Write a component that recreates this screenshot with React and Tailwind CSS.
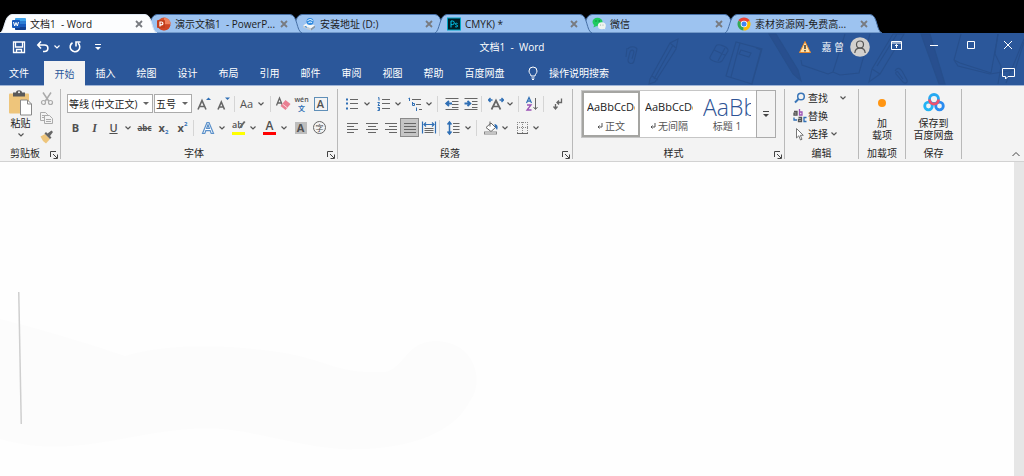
import React, { useState } from 'react';

const windowTabs = [
  { id: 'word', title: '文档1  - Word' },
  { id: 'ppt', title: '演示文稿1  - PowerP...' },
  { id: 'disk', title: '安装地址 (D:)' },
  { id: 'ps', title: 'CMYK) *' },
  { id: 'wechat', title: '微信' },
  { id: 'chrome', title: '素材资源网-免费高...' },
];

const ribbonTabs = ['开始', '插入', '绘图', '设计', '布局', '引用', '邮件', '审阅', '视图', '帮助'];

const TabIcon = ({ id }) => {
  switch (id) {
    case 'word':
      return (
        <svg viewBox="0 0 14 14" className="h-3.5 w-3.5 shrink-0">
          <rect x="3" y="1" width="11" height="12" rx="1" fill="#41a5ee" />
          <rect x="3" y="4" width="11" height="3" fill="#2b7cd3" />
          <rect x="3" y="7" width="11" height="3" fill="#185abd" />
          <path d="M3 10h11v2a1 1 0 0 1-1 1H4a1 1 0 0 1-1-1z" fill="#103f91" />
          <rect x="0" y="3" width="8" height="8" rx="1" fill="#185abd" />
          <path d="M1.5 5l1.2 4L4 5.500 5.300 9l1.200-4" fill="none" stroke="#fff" strokeWidth="1" />
        </svg>
      );
    case 'ppt':
      return (
        <svg viewBox="0 0 14 14" className="h-3.5 w-3.5 shrink-0">
          <circle cx="7" cy="7" r="6.500" fill="#d35230" />
          <path d="M7 .5A6.500 6.500 0 0 1 13.500 7H7z" fill="#f0805c" />
          <path d="M.6 8h12.800a6.500 6.500 0 0 1-12.800 0z" fill="#cf4526" />
          <rect x="0" y="3" width="8" height="8" rx="1" fill="#c43e1c" />
          <path d="M3 9.500V5h1.500a1.400 1.400 0 0 1 0 2.800H3" fill="none" stroke="#fff" strokeWidth="1.200" />
        </svg>
      );
    case 'disk':
      return (
        <svg viewBox="0 0 14 14" className="h-3.5 w-3.5 shrink-0">
          <path d="M1 8.500l5-3 7 3-4 3z" fill="#f2f5f7" />
          <path d="M1 8.500l8 3v2l-8-3z" fill="#c3ccd4" />
          <path d="M9 11.500l4-3v2l-4 3z" fill="#8a96a0" />
          <circle cx="8" cy="4.500" r="3.500" fill="#2f8ae0" />
          <path d="M5.500 4c1.500-2 4-2 5 0M6.500 6c1-1.200 2.500-1 3.500-.4" fill="none" stroke="#e5f3ff" strokeWidth="1.100" />
          <path d="M3 9.500l2 .8" stroke="#2f8ae0" />
        </svg>
      );
    case 'ps':
      return (
        <svg viewBox="0 0 14 14" className="h-3.5 w-3.5 shrink-0">
          <rect x=".5" y="1" width="13" height="12" fill="#001e26" stroke="#00a8c8" />
          <path d="M4 10.500V4h1.500a1.800 1.800 0 0 1 0 3.600H4M10.500 6.500c-1-.6-2.500-.3-2.300.6.2 1 2.400.6 2.400 1.900 0 1-1.600 1.200-2.500.6" fill="none" stroke="#00c8f0" />
        </svg>
      );
    case 'wechat':
      return (
        <svg viewBox="0 0 14 14" className="h-3.5 w-3.5 shrink-0">
          <ellipse cx="5.500" cy="5" rx="5" ry="4.200" fill="#1fcb60" />
          <path d="M2 8l-.5 2.500L4.500 9z" fill="#1fcb60" />
          <ellipse cx="9.800" cy="8.800" rx="4" ry="3.500" fill="#eef4f0" />
          <path d="M11.500 11.500l1.800 1-.5-2z" fill="#eef4f0" />
          <circle cx="4" cy="4" r=".7" fill="#0a7a35" />
          <circle cx="7.200" cy="4" r=".7" fill="#0a7a35" />
          <circle cx="8.600" cy="8" r=".5" fill="#8a9a90" />
          <circle cx="11" cy="8" r=".5" fill="#8a9a90" />
        </svg>
      );
    default:
      return (
        <svg viewBox="0 0 14 14" className="h-3.5 w-3.5 shrink-0">
          <path d="M7 7L1.400 3.700A6.500 6.500 0 0 1 12.600 3.700z" fill="#ea4335" />
          <path d="M7 7L1.400 3.700A6.500 6.500 0 0 0 6.500 13.500z" fill="#34a853" />
          <path d="M7 7l5.600-3.300A6.500 6.500 0 0 1 6.500 13.500z" fill="#fbbc05" />
          <circle cx="7" cy="7" r="3.300" fill="#fff" />
          <circle cx="7" cy="7" r="2.500" fill="#4285f4" />
        </svg>
      );
  }
};

const WindowTab = ({ tab, active, raised, onSelect }) => (
  <div className={`relative h-[19px] w-[145px] shrink-0 ${active ? 'z-20' : raised ? 'z-10' : ''}`}>
    <svg viewBox="0 0 157 19" className="absolute top-0 left-0 h-[19px] w-[157px]">
      <path
        d="M0 19C5 17 4 1 12 .5H145C153 1 151 17 157 19z"
        fill={active ? '#fcfdfe' : '#9dc3f0'}
        stroke={active ? '#dfe8f3' : '#466fa5'}
        strokeWidth="1"
      />
    </svg>
    <div className="relative flex h-full items-center pl-3">
      <button onClick={onSelect} className="flex w-[122px] items-center gap-1 whitespace-pre text-[#1c1c1c]">
        <TabIcon id={tab.id} />
        {tab.title}
      </button>
      <button aria-label="关闭标签" className="flex h-3 w-3 shrink-0 items-center justify-center">
        <svg viewBox="0 0 8 8" className="h-2 w-2">
          <path d="M1 1l6 6M7 1L1 7" stroke="#787b80" strokeWidth="1.800" />
        </svg>
      </button>
    </div>
  </div>
);

// School supplies doodle behind the title bar
const HeaderArt = () => (
  <svg
    viewBox="0 0 404 52"
    className="pointer-events-none absolute top-0 right-0 h-[52px] w-[404px]"
    fill="none"
    stroke="#274f8c"
    strokeWidth="1.100"
  >
    <path d="M8 16c1-3 8-3 9 0l-3 12c-1 4-6 3-6-1l2-8c1-3 4-2 4 0l-2 7M7 15l-1 9" />
    <path d="M58 6L50 10 30 46 29 51 35 49 56 16zM50 10l6 5M32 43l6 4M53 12L34 46" />
    <path d="M90 24l6-11c2-3 13 1 12 5l-6 10c-3 3-14-1-12-4zM94 17l11 5M98 28l7-13" />
    <path d="M106 43L116 9l26 7-10 35zM120 10l-9 34M106 43l26 8M121 17l10 3-2 4-10-3zM136 15l5 2-9 33" />
    <path d="M149 1h7l22 36 3 11-8-7z" fill="#284f8f" />
    <path d="M181 27l1 5 26 9 5-2 7 3 19-2 11-39M213 39l12-38" />
    <path d="M249 49l3-13 21-35h11l-24 40zM252 36l8 5M257 33l20-32" />
    <path d="M275 38c2-4 5-3 7 0l5 9c1 3-2 4-4 2l-7-8c-1-2 1-3 2-2l5 7" />
    <path d="M301 1h9l15 50h-6z" fill="#284f8f" />
    <path d="M341 1l-7 26 4 6 32 8 25-4 9-28M371 40l7-39M334 27l6 3 31 10" />
    <path d="M378 1l-3 20 6 12-3 18M404 6l-18 44" />
  </svg>
);

const Chevron = ({ color = '#555' }) => (
  <svg viewBox="0 0 6 4" className="h-1 w-1.5" aria-hidden="true">
    <path d="M.5.5L3 3 5.500.5" fill="none" stroke={color} strokeWidth="1.200" />
  </svg>
);

const Tool = ({ label, on, children }) => (
  <button
    aria-label={label}
    title={label}
    className={`flex h-[19px] w-[19px] shrink-0 items-center justify-center leading-none text-[#505050] ${on ? 'border border-[#8a8a8a] bg-[#c5c5c5]' : ''}`}
  >
    {children}
  </button>
);

const Drop = ({ label }) => (
  <button aria-label={label} className="flex h-[19px] w-3 shrink-0 items-center justify-center pr-0.5">
    <Chevron />
  </button>
);

const Sep = () => <span className="mx-0.5 h-4 w-px shrink-0 bg-[#d5d5d5]" />;

const WideSep = () => <span className="mr-1 ml-px h-4 w-px shrink-0 bg-[#d5d5d5]" />;

const Svg = ({ children }) => (
  <svg viewBox="0 0 16 16" className="h-4 w-4 shrink-0" fill="none" stroke="#666" strokeWidth="1">
    {children}
  </svg>
);

const Group = ({ label, launcher, className, children }) => (
  <section className={`flex shrink-0 flex-col border-r border-[#b9b9b9] ${className}`}>
    <div className="flex-1">{children}</div>
    <div className="flex h-3 items-center">
      <span className="flex-1 text-center leading-3">{label}</span>
      {launcher && (
        <button aria-label={`${label}设置`} className="mt-1 mr-0.5 h-2 w-2">
          <svg viewBox="0 0 8 8" className="h-2 w-2" fill="none" stroke="#444">
            <path d="M.5 6V.5H6M3 3l4 4M7.500 3.500v4h-4" />
          </svg>
        </button>
      )}
    </div>
  </section>
);

const ClipboardGroup = () => (
  <Group label="剪贴板" launcher className="w-[61px]">
    <div className="flex gap-1 pl-2">
      <button className="flex w-[25px] flex-col items-center">
        <svg viewBox="0 0 25 27" className="h-7 w-[25px]">
          <rect x="1" y="4" width="20" height="20" rx="1" fill="#eec57b" />
          <path d="M5 3h3c0-3 6-3 6 0h3v4H5z" fill="#595959" />
          <circle cx="11" cy="2.800" r="1" fill="#f3f3f3" />
          <path d="M12.500 10.500h7l4 4v11h-11z" fill="#fff" stroke="#888" />
          <path d="M19.500 10.500v4h4" fill="none" stroke="#888" />
        </svg>
        <span className="leading-3">粘贴</span>
        <span className="flex h-3 items-center"><Chevron /></span>
      </button>
      <div className="flex flex-col">
        <Tool label="剪切">
          <Svg>
            <path d="M4 1.500l6 9M12 1.500l-6 9" stroke="#aaa" strokeWidth="1.500" />
            <circle cx="4.500" cy="11.500" r="2" stroke="#aaa" strokeWidth="1.200" />
            <circle cx="11.500" cy="11.500" r="2" stroke="#aaa" strokeWidth="1.200" />
          </Svg>
        </Tool>
        <Tool label="复制">
          <Svg>
            <path d="M1.500 2.500h5l2 2v6h-7zM3 5.500h3M3 7.500h3" stroke="#aaa" />
            <path d="M5.500 5.500h5l3 3v5h-8z" fill="#f3f3f3" stroke="#aaa" />
            <path d="M7 9.500h5M7 11.500h5" stroke="#aaa" />
          </Svg>
        </Tool>
        <Tool label="格式刷">
          <Svg>
            <path d="M1.500 7.500l4.500-2.500 5 5-4 4.500-3-2.500z" fill="#eec57b" stroke="none" />
            <path d="M5.500 4.500l5.500 5.500 1.500-1.500-1.500-1.500 3-4-1.500-1.500-4 3-1.500-1.500z" fill="#666" stroke="none" />
          </Svg>
        </Tool>
      </div>
    </div>
  </Group>
);

const FontGroup = () => (
  <Group label="字体" launcher className="w-[277px]">
    <div className="mt-[5px] flex flex-col gap-[5px]">
      <div className="flex items-center pl-1.5">
        <div className="relative">
          <select aria-label="字体名称" className="h-[19px] w-[86px] appearance-none border border-[#ababab] bg-white pl-px text-[#222]">
            <option>等线 (中文正文)</option>
          </select>
          <span className="pointer-events-none absolute top-2 right-1 border-x-3 border-t-3 border-x-transparent border-t-[#666]" />
        </div>
        <div className="relative mr-0.5 ml-px">
          <select aria-label="字号" className="h-[19px] w-[38px] appearance-none border border-[#ababab] bg-white pl-px text-[#222]">
            <option>五号</option>
          </select>
          <span className="pointer-events-none absolute top-2 right-1 border-x-3 border-t-3 border-x-transparent border-t-[#666]" />
        </div>
        <Tool label="增大字号">
          <Svg>
            <path d="M2 13.500L6 4.500l4 9M3.500 10.500h5" strokeWidth="1.600" />
            <path d="M10 4L12.500 1.500 15 4z" fill="#2f6fb5" stroke="none" />
          </Svg>
        </Tool>
        <Tool label="减小字号">
          <Svg>
            <path d="M3 13.500l3.300-7.500 3.200 7.500M4.500 11h4" strokeWidth="1.600" />
            <path d="M10 1.500L12.500 4 15 1.500z" fill="#2f6fb5" stroke="none" />
          </Svg>
        </Tool>
        <Sep />
        <Tool label="更改大小写"><span className="text-[11px]">Aa</span></Tool>
        <Drop label="大小写选项" />
        <Sep />
        <Tool label="清除格式">
          <Svg>
            <path d="M1.500 9.500l3-7.500 3 7.500M3 7h3" strokeWidth="1.300" />
            <path d="M10.500 4l5 4-5 6-5-4z" fill="#ea7f92" stroke="none" />
            <path d="M7.500 8l5 4" stroke="#fbd5db" />
          </Svg>
        </Tool>
        <Tool label="拼音指南">
          <span className="flex flex-col items-center text-[7px] leading-[9px]">
            <span className="font-semibold">wén</span>
            <span className="font-bold text-[#2f6fb5]">文</span>
          </span>
        </Tool>
        <Tool label="字符边框">
          <span className="flex h-[14px] w-[14px] items-center justify-center border border-[#5f8fb8] text-[11px] font-semibold">A</span>
        </Tool>
      </div>
      <div className="flex items-center pl-[5px]">
        <Tool label="加粗"><b className="text-[11px]">B</b></Tool>
        <Tool label="倾斜"><i className="font-['Liberation_Serif'] text-[12px] font-bold">I</i></Tool>
        <Tool label="下划线"><u className="text-[11px] font-semibold">U</u></Tool>
        <Drop label="下划线选项" />
        <Tool label="删除线"><s className="text-[8px] font-bold">abc</s></Tool>
        <Tool label="下标"><b className="text-[11px]">x</b><b className="mt-2 text-[6px] text-[#2f6fb5]">2</b></Tool>
        <Tool label="上标"><b className="text-[11px]">x</b><b className="mb-2 text-[6px] text-[#2f6fb5]">2</b></Tool>
        <WideSep />
        <Tool label="文本效果">
          <Svg>
            <path d="M2.500 13.500L7 2.500h2l4.500 11h-2.300l-1-2.800H5.800l-1 2.800zM6.600 8.500h2.800L8 4.800z" stroke="#5b90c9" strokeWidth="1.200" fill="#fff" />
          </Svg>
        </Tool>
        <Drop label="文本效果选项" />
        <Tool label="突出显示">
          <span className="relative flex h-[15px] w-[13px] border-b-3 border-[#ffff00] text-[9px] font-semibold">
            <span className="leading-[10px]">ab</span>
            <svg viewBox="0 0 8 10" className="absolute top-0 -right-px h-2.5 w-2">
              <path d="M1 9l1-3 4-5 1.500 1-4 5z" fill="#666" />
            </svg>
          </span>
        </Tool>
        <Drop label="突出显示颜色" />
        <Tool label="字体颜色">
          <span className="h-[15px] w-[13px] border-b-3 border-[#ff0000] text-center text-[12px] leading-[12px] font-semibold">A</span>
        </Tool>
        <Drop label="选择字体颜色" />
        <Tool label="字符底纹">
          <span className="flex h-3 w-3 items-center justify-center bg-[#bdbdbd] text-[11px] font-bold">A</span>
        </Tool>
        <Tool label="带圈字符">
          <span className="flex h-[13px] w-[13px] items-center justify-center rounded-full border border-[#666] text-[8px]">字</span>
        </Tool>
      </div>
    </div>
  </Group>
);

const ParagraphGroup = () => (
  <Group label="段落" launcher className="w-[235px]">
    <div className="mt-[5px] flex flex-col gap-[5px] pl-[5px]">
      <div className="flex items-center">
        <Tool label="项目符号">
          <Svg>
            <path d="M5 3.500h8M5 7.500h8M5 12.500h8" />
            <path d="M1 3.500h2M1 7.500h2M1 12.500h2" stroke="#2f6fb5" strokeWidth="2" />
          </Svg>
        </Tool>
        <Drop label="项目符号库" />
        <Tool label="编号">
          <Svg>
            <path d="M6 3.500h8M6 7.500h8M6 12.500h8" />
            <path d="M2 2l1-.5v3M1.500 6.500h2l-1.500 3h2M1.500 11.500h2v3h-2M2 13h1.500" stroke="#2f6fb5" />
          </Svg>
        </Tool>
        <Drop label="编号库" />
        <Tool label="多级列表">
          <Svg>
            <path d="M5 3.500h9M9 8.500h5M12 13.500h3" />
            <path d="M1.500 2.500l1-.5v3M5.500 6v3.500h2V7.500h-2M9.500 11.500v3.500" stroke="#2f6fb5" />
          </Svg>
        </Tool>
        <Drop label="列表库" />
        <WideSep />
        <Tool label="减少缩进量">
          <Svg>
            <path d="M1.500 2.500h13M8 5.500h6.500M8 8.500h6.500M8 11.500h6.500M1.500 13.500h13" />
            <path d="M8 7.500H3M5 5L2.200 7.500 5 10" stroke="#2f6fb5" strokeWidth="1.800" />
          </Svg>
        </Tool>
        <Tool label="增加缩进量">
          <Svg>
            <path d="M1.500 2.500h13M9 5.500h5.500M9 8.500h5.500M9 11.500h5.500M1.500 13.500h13" />
            <path d="M1.500 7.500h5M4.500 5l2.800 2.500L4.500 10" stroke="#2f6fb5" strokeWidth="1.800" />
          </Svg>
        </Tool>
        <WideSep />
        <Tool label="中文版式">
          <Svg>
            <path d="M3.500 13.500L8 4.500l4.500 9M5.500 10.500h5" strokeWidth="1.700" />
            <path d="M.5 4h4M2.500 2l-2 2 2 2M15.500 4h-4M13.500 2l2 2-2 2" stroke="#2f6fb5" strokeWidth="1.400" />
          </Svg>
        </Tool>
        <Drop label="中文版式选项" />
        <WideSep />
        <Tool label="排序">
          <Svg>
            <path d="M1.500 7L4 1.500 6.500 7M2.500 5.200h3" stroke="#2f6fb5" strokeWidth="1.200" />
            <path d="M2 9h4l-4 5h4.500" stroke="#9b51b5" strokeWidth="1.300" />
            <path d="M10.500 2v11M8.500 11l2 2.500 2-2.500" />
          </Svg>
        </Tool>
        <WideSep />
        <Tool label="显示编辑标记">
          <Svg>
            <path d="M11.500 2.500v4H7M9 4.500l-2 2 2 2" strokeWidth="1.300" />
            <path d="M5.500 8v5M3.500 10.500l2 2.500 2-2.500" strokeWidth="1.300" />
          </Svg>
        </Tool>
      </div>
      <div className="flex items-center">
        <Tool label="左对齐"><Svg><path d="M2 3.500h11M2 6.500h7M2 9.500h11M2 12.500h7" /></Svg></Tool>
        <Tool label="居中"><Svg><path d="M2 3.500h12M4 6.500h8M2 9.500h12M4 12.500h8" /></Svg></Tool>
        <Tool label="右对齐"><Svg><path d="M2 3.500h12M6 6.500h8M2 9.500h12M6 12.500h8" /></Svg></Tool>
        <Tool label="两端对齐" on><Svg><path d="M2 3.500h12M2 6.500h12M2 9.500h12M2 12.500h12" /></Svg></Tool>
        <Tool label="分散对齐">
          <Svg>
            <path d="M1.500 1.500v12M14.500 1.500v12M3 4.500h10M5 2.500L3 4.500l2 2M11 2.500l2 2-2 2" stroke="#2f6fb5" strokeWidth="1.200" />
            <path d="M3.500 8.500h9M3.500 10.500h9M3.500 12.500h9" />
          </Svg>
        </Tool>
        <WideSep />
        <Tool label="行和段落间距">
          <Svg>
            <path d="M3.500 2v12M1.500 4.500L3.500 2l2 2.500M1.500 11.500l2 2.500 2-2.500" stroke="#2f6fb5" strokeWidth="1.500" />
            <path d="M7 3.500h6.500M7 6.500h6.500M7 9.500h6.500M7 12.500h6.500" />
          </Svg>
        </Tool>
        <Drop label="间距选项" />
        <WideSep />
        <Tool label="底纹">
          <Svg>
            <path d="M3 7.500L8 3l4.500 4.500L8 11.500zM7 1.500v5" fill="#fff" />
            <path d="M11.500 4c3 .5 4 3 2.500 6-1-2-2.500-3-2.500-6z" fill="#2f6fb5" stroke="none" />
            <rect x="1.500" y="12" width="12" height="2" fill="#fff" stroke="#888" />
          </Svg>
        </Tool>
        <Drop label="底纹颜色" />
        <Tool label="边框">
          <Svg>
            <path d="M3.500 2v11M8.500 2v11M13.500 2v11M3 2.500h11M3 7.500h11" strokeDasharray="1 1" stroke="#888" />
            <path d="M3 13.500h11" />
          </Svg>
        </Tool>
        <Drop label="边框选项" />
      </div>
    </div>
  </Group>
);

const StyleCell = ({ name, active, mark, children }) => (
  <button
    className={`flex h-full w-[58px] flex-col items-center overflow-hidden border-2 ${active ? 'border-[#a5a5a2]' : 'border-transparent'}`}
  >
    <span className="flex h-[27px] w-12 items-center overflow-hidden whitespace-nowrap">{children}</span>
    <span className="flex items-center gap-0.5 leading-3 text-[#555]">
      {mark && (
        <svg viewBox="0 0 6 6" className="h-1.5 w-1.5" fill="none" stroke="#555">
          <path d="M5 0v4H1M2.500 2.500L1 4l1.500 1.500" />
        </svg>
      )}
      {name}
    </span>
  </button>
);

const StylesGroup = () => (
  <Group label="样式" launcher className="w-[212px]">
    <div className="mt-px ml-2 flex h-12 w-[195px] border border-[#c6c6c6] bg-white">
      <StyleCell name="正文" mark active><span className="text-[11px] text-[#222]">AaBbCcDc</span></StyleCell>
      <StyleCell name="无间隔" mark><span className="text-[11px] text-[#222]">AaBbCcDc</span></StyleCell>
      <StyleCell name="标题 1"><span className="text-[23px] font-light text-[#2f5496]">AaBb</span></StyleCell>
      <button aria-label="更多样式" className="-my-px -mr-px ml-auto flex w-5 flex-col items-center justify-center gap-0.5 border border-[#ababab] bg-[#f3f3f3]">
        <span className="h-px w-1.5 bg-[#444]" />
        <span className="border-x-3 border-t-3 border-x-transparent border-t-[#444]" />
      </button>
    </div>
  </Group>
);

const EditingGroup = () => (
  <Group label="编辑" className="w-[74px]">
    <div className="flex flex-col pl-2">
      <div className="flex h-[18px] items-center">
        <button className="flex items-center gap-px">
          <svg viewBox="0 0 14 14" className="h-3.5 w-3.5" fill="none" stroke="#3a76b8">
            <circle cx="8" cy="5.500" r="3.300" strokeWidth="1.500" />
            <path d="M5.500 8L2 11.500" strokeWidth="2" />
          </svg>
          查找
        </button>
        <button aria-label="查找选项" className="ml-3"><Chevron /></button>
      </div>
      <button className="flex h-[18px] items-center gap-px">
        <svg viewBox="0 0 14 14" className="h-3.5 w-3.5" fill="none" strokeWidth="1.300">
          <path d="M1 2.500h3V6H1V4.200h3" stroke="#555" />
          <path d="M6.500 0V6H9V3H6.500" stroke="#9b51b5" />
          <path d="M5.500 8.500h3v4h-3v-2h3" stroke="#555" />
          <path d="M13.500 8.500H11v4h2.500M1 8.500v2.500h3" stroke="#2f6fb5" />
        </svg>
        替换
      </button>
      <button className="flex h-[18px] items-center gap-px">
        <svg viewBox="0 0 14 14" className="h-3.5 w-3.5" fill="#fff" stroke="#777">
          <path d="M3.500 1.500v9.500l2.300-2.200L7.500 13l1.500-.7-1.700-4h3z" />
        </svg>
        选择
        <span className="ml-0.5"><Chevron /></span>
      </button>
    </div>
  </Group>
);

const Word = () => {
  const [openTab, setOpenTab] = useState('word');
  const [ribbon, setRibbon] = useState('开始');

  return (
    <div className="flex min-h-screen flex-col overflow-hidden bg-[#fefefe] font-['Open_Sans','Noto_Sans_CJK_SC',sans-serif] text-[10px] leading-3 text-[#262626]">
      {/* Window tabs */}
      <nav className="flex bg-black pt-3.5">
        {windowTabs.map((tab, i) => (
          <WindowTab
            key={tab.id}
            tab={tab}
            active={tab.id === openTab}
            raised={i % 2 === 1}
            onSelect={() => setOpenTab(tab.id)}
          />
        ))}
      </nav>

      <header className="relative border-b border-[#9fb4d6] bg-[#2b579a] text-white">
        <HeaderArt />
        {/* Title bar */}
        <div className="relative grid h-7 grid-cols-[1fr_auto_1fr] items-center">
          <div className="flex items-center pl-3">
            <button aria-label="保存">
              <svg viewBox="0 0 14 14" className="h-3.5 w-3.5" fill="none" stroke="#fff" strokeWidth="1.300">
                <path d="M1.500 2h11v10.500h-11zM3.500 2v5h7V2M4.500 12.500V9.500h5v3" />
              </svg>
            </button>
            <button aria-label="撤消" className="ml-2.5">
              <svg viewBox="0 0 14 14" className="h-3.5 w-3.5" fill="none" stroke="#fff" strokeWidth="1.600">
                <path d="M5 1.500L1.800 5 5 8.500M2 5h6.500c4.500 0 4.500 6.500 0 6.500H7" />
              </svg>
            </button>
            <button aria-label="撤消列表" className="ml-1"><Chevron color="#fff" /></button>
            <button aria-label="重复" className="ml-2">
              <svg viewBox="0 0 14 14" className="h-3.5 w-3.5" fill="none" stroke="#fff" strokeWidth="1.600">
                <path d="M4.500 2.800a4.800 4.800 0 1 0 5.500.4M8 6.500V2h4.500" />
              </svg>
            </button>
            <button aria-label="自定义快速访问工具栏" className="ml-3 flex w-2 flex-col items-center gap-0.5">
              <span className="h-px w-1.5 bg-white" />
              <span className="border-x-3 border-t-3 border-x-transparent border-t-white" />
            </button>
          </div>
          <h1 className="whitespace-pre">文档1  -  Word</h1>
          <div className="flex items-center justify-end">
            <svg viewBox="0 0 12 12" className="h-3 w-3">
              <path d="M6 .5l5.500 11H.5z" fill="#ffe0a8" stroke="#e8882a" />
              <path d="M6 4v4M6 9v1.500" stroke="#222" strokeWidth="1.300" />
            </svg>
            <span className="ml-2.5">嘉 曾</span>
            <button aria-label="帐户" className="ml-1.5">
              <svg viewBox="0 0 20 20" className="h-5 w-5" fill="none" stroke="#555" strokeWidth="1.200">
                <circle cx="10" cy="10" r="9.800" fill="#d2d0ce" stroke="none" />
                <circle cx="10" cy="7.500" r="3.500" />
                <path d="M4.800 16c.5-6.500 9.900-6.500 10.400 0" />
              </svg>
            </button>
            <button aria-label="功能区显示选项" className="mb-1 ml-5">
              <svg viewBox="0 0 14 12" className="h-3 w-3.5" fill="none" stroke="#fff">
                <path d="M1.500 2.500h10v8h-10zM1.500 4h10M6.500 9V5.500M5 7l1.500-1.500L8 7" />
              </svg>
            </button>
            <button aria-label="最小化" className="mb-1 ml-6">
              <svg viewBox="0 0 12 12" className="h-3 w-3"><path d="M2 6.500h8" stroke="#fff" /></svg>
            </button>
            <button aria-label="最大化" className="mb-1 ml-[25px]">
              <svg viewBox="0 0 12 12" className="h-3 w-3"><path d="M2.500 2.500h7v7h-7z" fill="none" stroke="#fff" /></svg>
            </button>
            <button aria-label="关闭" className="mr-2.5 mb-1 ml-[25px]">
              <svg viewBox="0 0 12 12" className="h-3 w-3"><path d="M2 2l8 8M10 2l-8 8" stroke="#fff" /></svg>
            </button>
          </div>
        </div>

        {/* Ribbon tabs */}
        <div className="relative flex h-6 items-stretch">
          <button className="mr-1.5 w-[38px]">文件</button>
          {ribbonTabs.map((name) => (
            <button
              key={name}
              onClick={() => setRibbon(name)}
              className={`w-[41px] ${ribbon === name ? '-mb-px bg-[#f3f3f3] text-[#2b579a]' : ''}`}
            >
              {name}
            </button>
          ))}
          <button className="w-[61px]">百度网盘</button>
          <button className="ml-3 flex items-center gap-2.5">
            <svg viewBox="0 0 12 14" className="h-3.5 w-3" fill="none" stroke="#fff">
              <path d="M4 10C4 8 2 7.500 2 5a4 4 0 0 1 8 0c0 2.500-2 3-2 5zM4.500 12h3M5 13.500h2" />
            </svg>
            操作说明搜索
          </button>
          <button aria-label="批注" className="mr-2 ml-auto">
            <svg viewBox="0 0 15 14" className="h-3.5 w-[15px]" fill="none" stroke="#fff">
              <path d="M1.500 2.500h12v8H7l-2.500 2.500v-2.500h-3z" />
            </svg>
          </button>
        </div>
      </header>

      {/* Ribbon */}
      <div className="flex h-[76px] border-b border-[#d2d2d2] bg-[#f3f3f3] pt-[3px] pb-0.5">
        <ClipboardGroup />
        <FontGroup />
        <ParagraphGroup />
        <StylesGroup />
        <EditingGroup />
        <Group label="加载项" className="w-[47px]">
          <button className="flex w-full flex-col items-center">
            <span className="flex h-7 items-center"><span className="h-2 w-2 rounded-full bg-[#ff9512]" /></span>
            <span>加</span>
            <span>载项</span>
          </button>
        </Group>
        <Group label="保存" className="w-[56px]">
          <button className="flex w-full flex-col items-center">
            <svg viewBox="0 0 22 28" className="h-7 w-[22px]" fill="none" strokeWidth="2.800">
              <circle cx="11" cy="10" r="4.500" stroke="#25a9f2" />
              <circle cx="5.500" cy="17" r="3.800" stroke="#23b4f5" />
              <circle cx="16.500" cy="17" r="3.800" stroke="#2a8cf0" />
              <path d="M6.500 10.500a4.500 4.500 0 0 0 9 0" stroke="#f0506e" />
            </svg>
            <span>保存到</span>
            <span>百度网盘</span>
          </button>
        </Group>
        <button aria-label="折叠功能区" className="mt-auto mr-1 mb-0.5 ml-auto">
          <svg viewBox="0 0 8 6" className="h-1.5 w-2" fill="none" stroke="#444"><path d="M.5 5L4 1.500 7.500 5" /></svg>
        </button>
      </div>

      {/* Document */}
      <main className="flex flex-1">
        <div className="flex-1">
          <svg viewBox="0 0 480 290" className="mt-3 h-[290px] w-[480px]">
            <path
              d="M0 145C40 155 90 170 125 182c50-15 120-10 165-2 40 8 50 20 95 18 20-4 20-30 50-31 40 0 50 40 35 60-20 40-80 50-130 48-60-5-100-25-150-20-70 5-120 30-190 10z"
              fill="#fcfcfc"
            />
            <path d="M18 118h1.500l2.500 132h-1.500z" fill="#cfcfcf" />
          </svg>
        </div>
        <div className="w-2.5 bg-[#e6e6e6]" />
      </main>
    </div>
  );
};

export default Word;
